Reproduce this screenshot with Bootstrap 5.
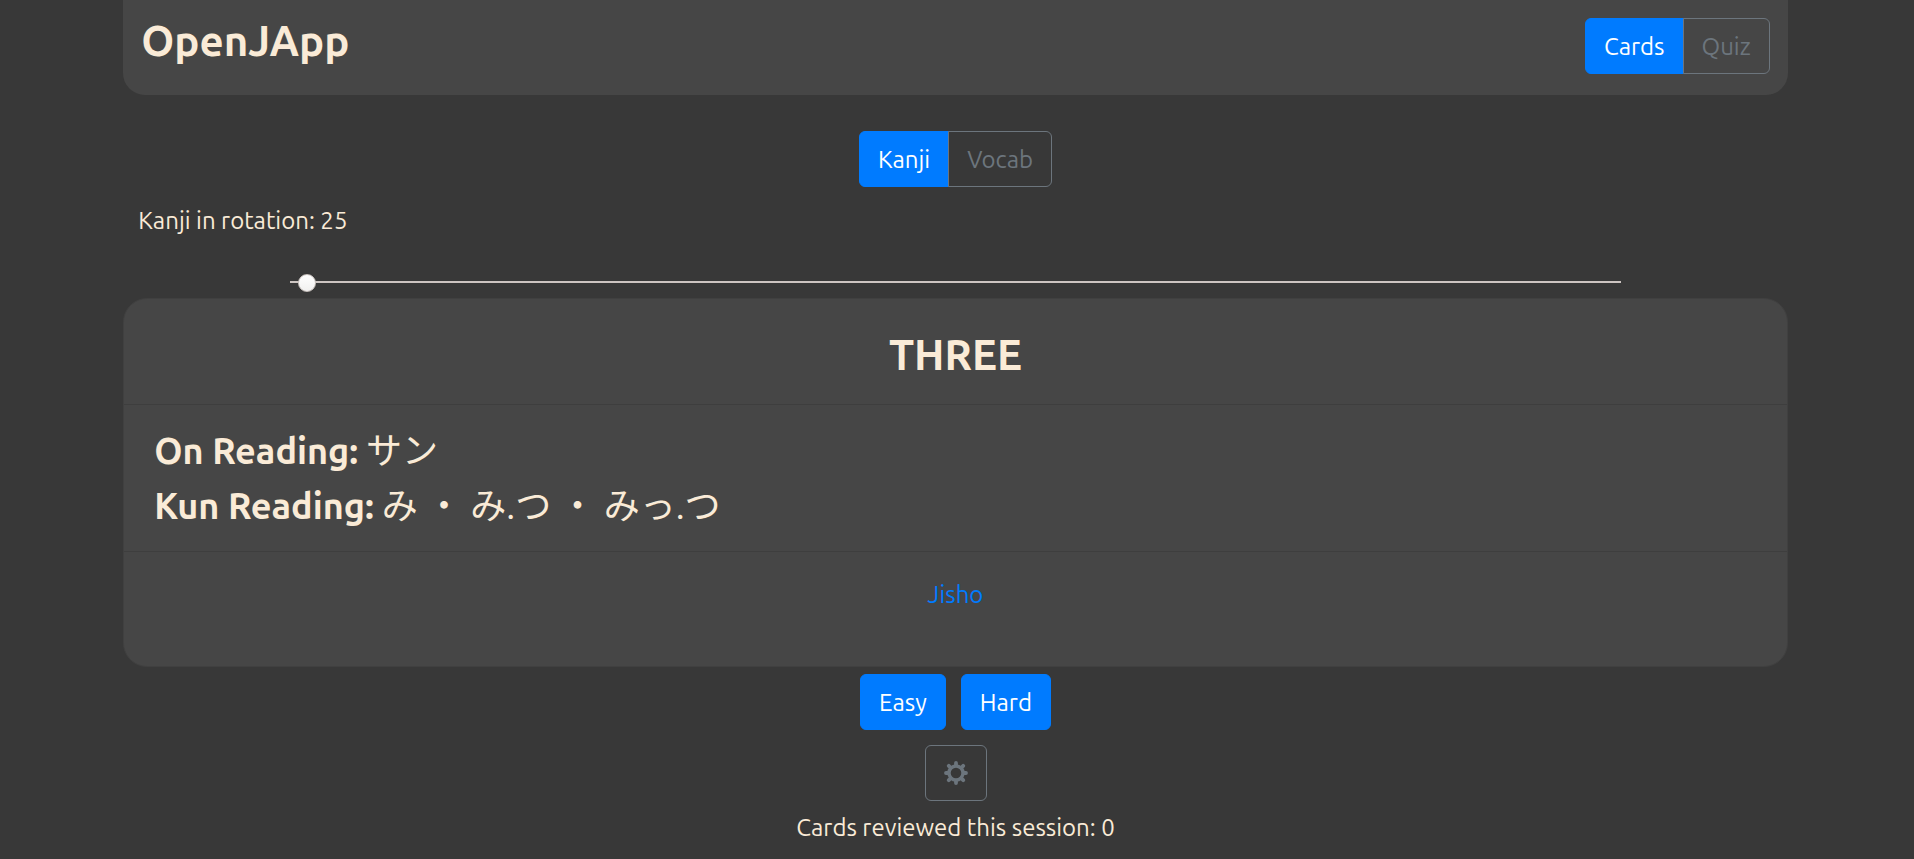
<!DOCTYPE html>
<html lang="en">
<head>
<meta charset="utf-8">
<meta name="viewport" content="width=device-width, initial-scale=1">
<title>OpenJApp</title>
<link href="https://cdn.jsdelivr.net/npm/bootstrap@5.3.0/dist/css/bootstrap.min.css" rel="stylesheet">
<style>
  html { font-size: 24px; }
  body {
    --bs-body-font-family: Ubuntu, "Noto Sans", "Noto Sans CJK JP", sans-serif;
    --bs-body-font-size: 24px;
    background: #383838;
    color: #faebd7;
    line-height: 36px;
    padding-right: 3px;
  }
  .app-shell { width: 87.1%; }
  .app-header { background: #464646; border-radius: 0 0 22px 22px; padding: 18px 18px 21px; }
  .app-title { font-size: 42px; line-height: 46px; font-weight: 600; }
  .btn {
    --bs-btn-font-size: 24px;
    --bs-btn-line-height: 36px;
    --bs-btn-padding-x: 18px;
    --bs-btn-border-radius: 6px;
    padding-top: 10px;
    padding-bottom: 8px;
  }
  .btn-primary { --bs-btn-bg: #007bff; --bs-btn-border-color: #007bff; }
  .btn-outline-secondary { --bs-btn-color: #6c757d; --bs-btn-border-color: #6c757d; }
  .mode-switch { margin-top: 36px; }
  .rotation-label { margin: 16px 15px 0; }
  .rotation-range { width: 80%; height: 18px; margin-top: 34px; }
  .rotation-range::-webkit-slider-runnable-track { height: 2px; background: #cdc5c2; border-radius: 0; }
  .rotation-range::-webkit-slider-thumb {
    width: 18px; height: 18px; margin-top: -7px;
    background: linear-gradient(#fff, #f1f0ef); border: 1px solid #c9c2be;
  }
  .study-card {
    --bs-card-bg: #464646;
    --bs-card-color: #faebd7;
    --bs-card-border-color: #404040;
    --bs-card-border-radius: 24px;
    margin-top: 7px;
  }
  .study-card > * + * { border-top: 1px solid #3e3e3e; }
  .card-meaning { font-size: 42px; line-height: 50px; padding: 31px 30px 24px; font-weight: 600; }
  .card-readings { font-size: 36px; line-height: 43px; padding: 24px 30px; }
  .card-readings dl > div { gap: 8px; }
  .card-readings dl > div + div { margin-top: 12px; }
  .card-readings dt { font-weight: 600; }
  .card-links { padding: 25px 30px 53px; }
  .card-links a { color: #007bff; }
  .answers { gap: 15px; margin-top: 7px; }
  .settings { margin-top: 15px; padding-top: 9px; padding-bottom: 9px; }
  .settings svg { display: block; width: 24px; height: 36px; }
  .session-count { margin-top: 9px; }
</style>
</head>
<body>
<div class="app-shell mx-auto">
  <header class="app-header d-flex justify-content-between align-items-start">
    <h1 class="app-title m-0">OpenJApp</h1>
    <div class="btn-group" role="group" aria-label="Study mode">
      <button type="button" class="btn btn-primary">Cards</button>
      <button type="button" class="btn btn-outline-secondary">Quiz</button>
    </div>
  </header>

  <main class="d-flex flex-column align-items-center">
    <div class="mode-switch btn-group" role="group" aria-label="Deck">
      <button type="button" class="btn btn-primary">Kanji</button>
      <button type="button" class="btn btn-outline-secondary">Vocab</button>
    </div>

    <label class="rotation-label align-self-start" for="rotation">Kanji in rotation: <span id="rotationValue">25</span></label>
    <input type="range" class="rotation-range form-range" id="rotation" min="12" max="2136" value="25">

    <section class="study-card card w-100">
      <h2 class="card-meaning text-center m-0">THREE</h2>
      <div class="card-readings">
        <dl class="m-0">
          <div class="d-flex"><dt>On Reading:</dt><dd class="m-0" lang="ja">サン</dd></div>
          <div class="d-flex"><dt>Kun Reading:</dt><dd class="m-0" lang="ja">み ・ み.つ ・ みっ.つ</dd></div>
        </dl>
      </div>
      <div class="card-links text-center"><a href="#jisho" class="text-decoration-none">Jisho</a></div>
    </section>

    <div class="answers d-flex">
      <button type="button" class="btn btn-primary">Easy</button>
      <button type="button" class="btn btn-primary">Hard</button>
    </div>
    <button type="button" class="settings btn btn-outline-secondary" aria-label="Settings">
      <svg viewBox="0 -6 24 36" fill="none" stroke="currentColor" aria-hidden="true">
        <circle cx="12" cy="12" r="7" stroke-width="3.4"/>
        <path stroke-width="3.8" stroke-linecap="round" d="M12 4V2M12 20v2M4 12H2M20 12h2M6.3 6.3 4.8 4.8M17.7 6.3l1.5-1.5M6.3 17.7l-1.5 1.5M17.7 17.7l1.5 1.5"/>
      </svg>
    </button>
    <p class="session-count mb-0">Cards reviewed this session: 0</p>
  </main>
</div>
<script src="https://cdn.jsdelivr.net/npm/bootstrap@5.3.0/dist/js/bootstrap.bundle.min.js"></script>
<script>
  const range = document.getElementById('rotation');
  range.addEventListener('input', () => {
    document.getElementById('rotationValue').textContent = range.value;
  });
</script>
</body>
</html>
